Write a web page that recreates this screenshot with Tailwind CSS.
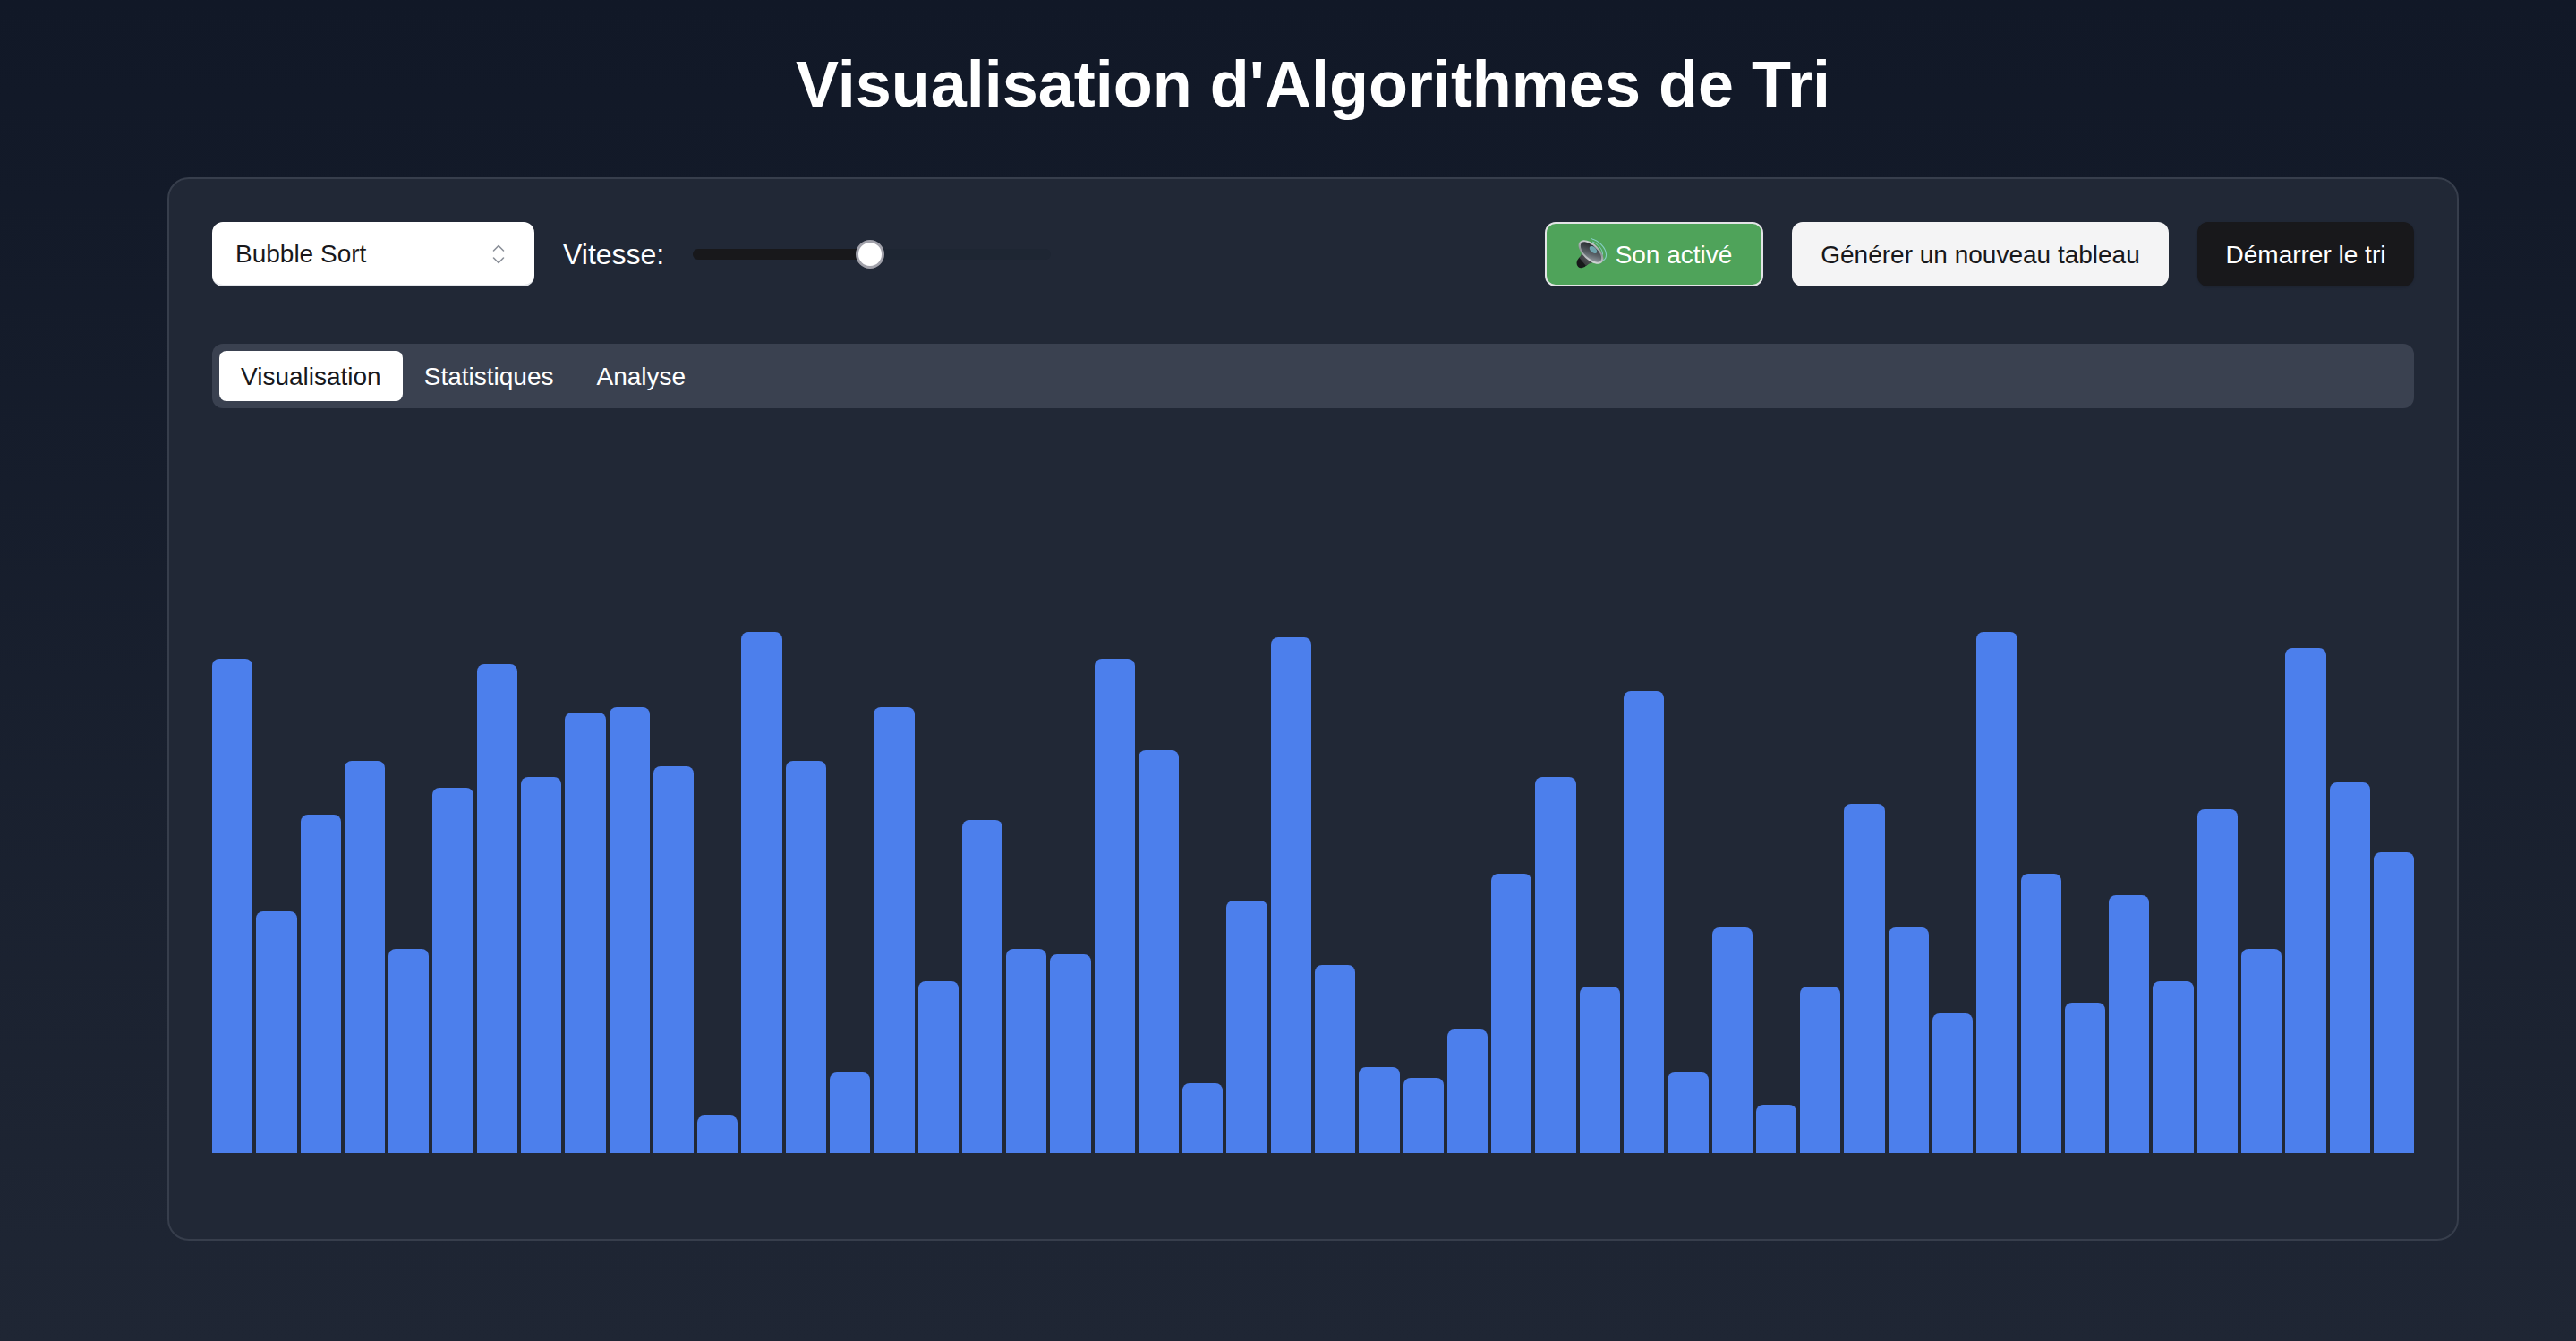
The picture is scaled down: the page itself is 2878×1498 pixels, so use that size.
<!DOCTYPE html>
<html lang="fr">
<head>
  <meta charset="UTF-8" />
  <title>Visualisation d'Algorithmes de Tri</title>
  <script src="https://cdn.jsdelivr.net/npm/@tailwindcss/browser@4"></script>
</head>
<body class="min-h-screen bg-gradient-to-b from-[#111827] to-[#1f2634] font-['Liberation_Sans',Arial,sans-serif] text-white">
  <div class="ml-[187px] w-[2560px] pt-[54px]">
    <h1 class="mb-[64px] text-center text-[72px] leading-[80px] font-bold">Visualisation d'Algorithmes de Tri</h1>

    <div class="rounded-3xl border-2 border-[#373e4c] bg-[#212836] px-12 pt-12 pb-[96px]">
      <!-- Controles -->
      <div class="flex h-[72px] items-center">
        <button class="flex h-[72px] w-[360px] items-center justify-between rounded-xl border-b-2 border-[#e5e7eb] bg-white pt-[2px] pr-[32px] pl-[26px] text-[28px] text-[#18181b]">
          Bubble Sort
          <svg class="h-[24px] w-[16px] text-[#8a8f98]" viewBox="0 0 16 24" fill="none" stroke="currentColor" stroke-width="1.6" stroke-linecap="round" stroke-linejoin="round"><path d="M2.5 8l5.5-5.5L13.500 8M2.500 16l5.500 5.500 5.500-5.500"/></svg>
        </button>
        <span class="ml-8 text-[32px]">Vitesse:</span>
        <div class="relative ml-8 h-[12px] w-[400px] rounded-full bg-[#1e2633]">
          <div class="h-full w-[198px] rounded-full bg-[#18181b]"></div>
          <div class="absolute top-[-10px] left-[182px] h-[32px] w-[32px] rounded-full border-[3px] border-[#a1a1aa] bg-white"></div>
        </div>

        <div class="ml-auto flex items-center gap-8">
          <button class="flex h-[72px] w-[244px] items-center justify-center gap-[8px] rounded-xl border-2 border-[#e4e4e7] bg-[#4fa35a] pt-[2px] text-[28px]">
            <svg class="mt-[-2px] h-[40px] w-[36px]" viewBox="0 0 36 40" fill="none">
              <defs>
                <linearGradient id="cone" x1="0" y1="1" x2="1" y2="0"><stop offset="0" stop-color="#2a2b2e"/><stop offset="1" stop-color="#8d9296"/></linearGradient>
                <linearGradient id="rim" x1="0" y1="0" x2="1" y2="1"><stop offset="0" stop-color="#e6e8ea"/><stop offset="0.5" stop-color="#8f9498"/><stop offset="1" stop-color="#f2f3f4"/></linearGradient>
                <linearGradient id="inner" x1="0" y1="0" x2="1" y2="1"><stop offset="0" stop-color="#16181b"/><stop offset="0.6" stop-color="#5d646a"/><stop offset="1" stop-color="#a8b0b5"/></linearGradient>
              </defs>
              <path d="M16 2.500C25 4 33 13 33.500 20c.2 3-1 5.500-3.500 7" stroke="#86cfc6" stroke-width="1.100"/>
              <path d="M18 6c6 2 11 8 11.500 13 .2 2-.4 3.500-1.500 4.500" stroke="#86cfc6" stroke-width="0.900"/>
              <ellipse cx="7.500" cy="28" rx="6" ry="8" transform="rotate(42 7.500 28)" fill="#17181a"/>
              <path d="M5 8C7 15 7 20 3.500 24L11 33c4-3.500 10-5 17-5z" fill="url(#cone)"/>
              <ellipse cx="16.500" cy="17.500" rx="17" ry="9" transform="rotate(43 16.500 17.500)" fill="url(#rim)"/>
              <ellipse cx="16.500" cy="17.500" rx="14.500" ry="7" transform="rotate(43 16.500 17.500)" fill="url(#inner)"/>
              <ellipse cx="19" cy="15" rx="5" ry="3" transform="rotate(43 19 15)" fill="#6fa3ad"/>
            </svg>
            Son activé
          </button>
          <button class="flex h-[72px] w-[421px] items-center justify-center rounded-xl bg-[#f4f4f5] pt-[2px] text-[28px] text-[#18181b]">Générer un nouveau tableau</button>
          <button class="flex h-[72px] w-[242px] items-center justify-center rounded-xl bg-[#18181b] pt-[2px] text-[28px] shadow-sm">Démarrer le tri</button>
        </div>
      </div>

      <!-- Onglets -->
      <div class="mt-[64px] flex h-[72px] items-center rounded-xl bg-[#3a4150] p-2 text-[28px]">
        <div class="flex h-[56px] items-center rounded-lg bg-white px-6 pt-[2px] text-[#18181b]">Visualisation</div>
        <div class="flex h-[56px] items-center px-6 pt-[2px]">Statistiques</div>
        <div class="flex h-[56px] items-center px-6 pt-[2px]">Analyse</div>
      </div>

      <!-- Barres -->
      <div id="bars" class="mt-8 flex h-[800px] items-end gap-1"></div>
    </div>
  </div>

  <script>
    const values = [92,45,63,73,38,68,91,70,82,83,72,7,97,73,15,83,32,62,38,37,92,75,13,47,96,35,16,14,23,52,70,31,86,15,42,9,31,65,42,26,97,52,28,48,32,64,38,94,69,56];
    const bars = document.getElementById('bars');
    values.forEach((v) => {
      const bar = document.createElement('div');
      bar.className = 'flex-1 rounded-t-lg bg-[#4c7fec]';
      bar.style.height = (v * 6) + 'px';
      bars.appendChild(bar);
    });
  </script>
</body>
</html>
